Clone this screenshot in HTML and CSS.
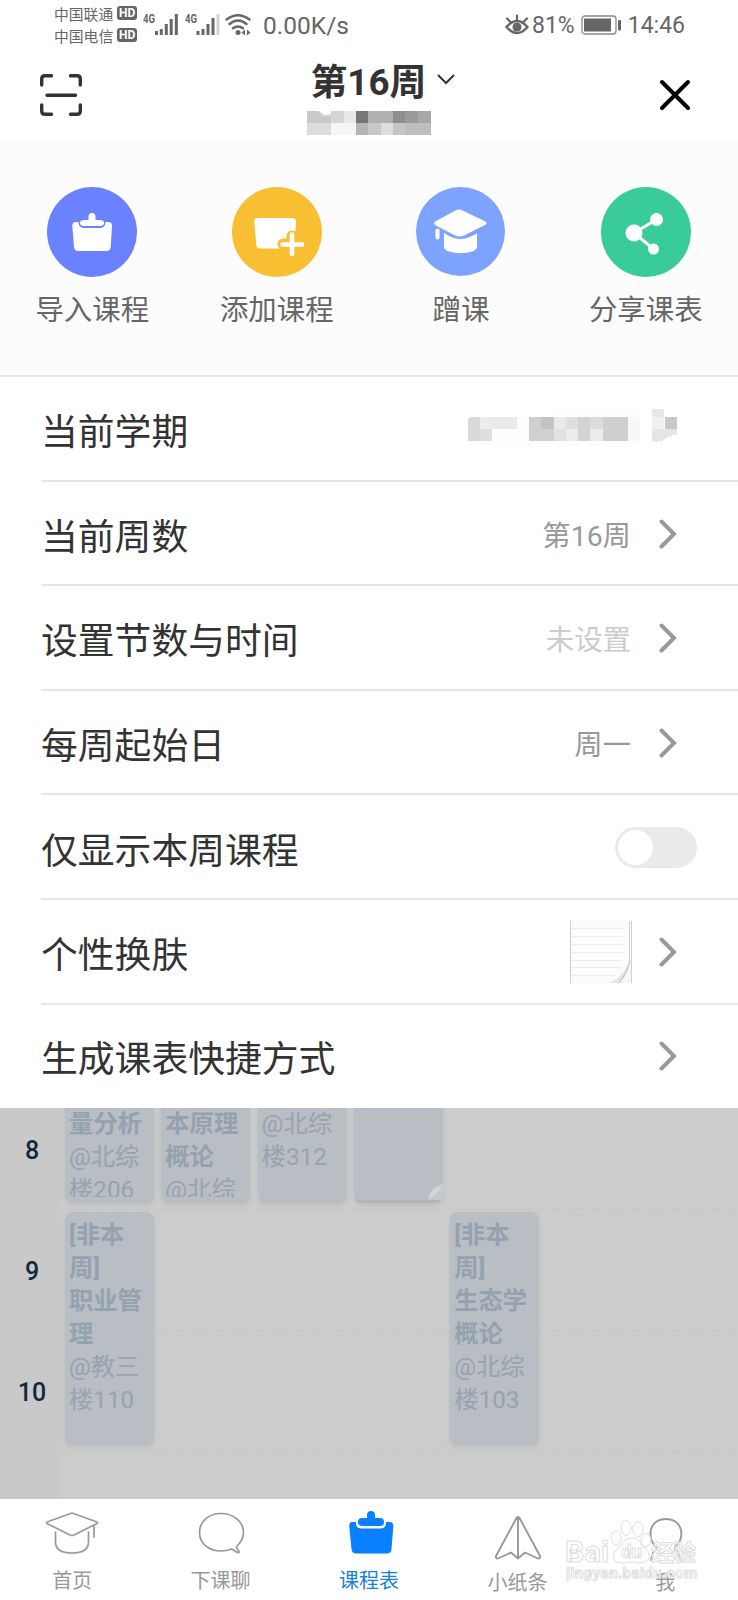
FILE: index.html
```html
<!DOCTYPE html>
<html lang="zh-CN">

<head>
    <meta charset="UTF-8">
    <meta name="viewport" content="width=device-width, initial-scale=1.0">
    <title>课程表</title>

    <link rel="stylesheet" href="styles.css">
</head>

<body>
    <!-- Shared icons -->
    <svg class="sprite" width="0" height="0">
        <symbol id="arrow" viewBox="0 0 18 30">
            <path d="M2.500 2.500L15 15L2.500 27.500" fill="none" stroke="#999" stroke-width="4" stroke-linecap="round" stroke-linejoin="miter" />
        </symbol>
    </svg>

    <div class="app">
        <!-- Status bar -->
        <div class="status-bar">
            <div class="carriers">
                <div class="carrier">中国联通<span class="hd">HD</span></div>
                <div class="carrier">中国电信<span class="hd">HD</span></div>
            </div>
            <svg class="signals" width="110" height="24" viewBox="0 0 110 24">
                <g fill="none" stroke="#666" stroke-width="3">
                    <path d="M13.500 19v4M18.300 17v6M23.300 12v11M28.200 7v16M33.300 2v21" />
                    <path d="M55 19v4M60 17v6M65 12v11M70 6v17" />
                    <path d="M75 2v21" stroke="#d5d5d5" />
                </g>
                <g class="net-type">
                    <text x="0" y="11" textLength="12" lengthAdjust="spacingAndGlyphs">4G</text>
                    <text x="42" y="11" textLength="12" lengthAdjust="spacingAndGlyphs">4G</text>
                </g>
                <g fill="none" stroke="#666" stroke-width="2.400" stroke-linecap="round">
                    <path d="M83.500 7.500Q95 -1 106.500 7.500M86.500 12Q95 5 103.500 12M90 16.300Q95 12.500 100 16.300" />
                </g>
                <circle cx="95" cy="20.500" r="2.500" fill="#666" />
                <path d="M98.500 20.500l3.500-3v6zM107.500 20.500l-3.500-3v6z" fill="#666" />
            </svg>
            <span class="speed">0.00K/s</span>
            <div class="status-right">
                <svg class="eye" width="24" height="22" viewBox="0 0 24 22">
                    <path d="M1.500 13Q12 1 22.500 13Q12 25 1.500 13z" fill="none" stroke="#666" stroke-width="2.400" />
                    <circle cx="12" cy="13" r="4.500" fill="#666" />
                    <path d="M12 6V1.500M5.500 8L2 4.500M18.500 8L22 4.500" stroke="#666" stroke-width="2.200" stroke-linecap="round" />
                </svg>
                <span class="percent">81%</span>
                <svg class="battery" width="41" height="20" viewBox="0 0 41 20">
                    <rect x="1" y="1" width="34" height="18" rx="3" fill="none" stroke="#888" stroke-width="1.300" />
                    <rect x="3" y="3.500" width="27" height="13" fill="#666" />
                    <rect x="37" y="5" width="3" height="10.500" rx="1" fill="#666" />
                </svg>
                <span class="clock">14:46</span>
            </div>
        </div>

        <!-- Title bar -->
        <header class="title-bar">
            <svg width="44" height="44" viewBox="0 0 44 44" fill="none" stroke="#333" stroke-width="3.400" stroke-linecap="round">
                <path d="M2.700 12V6Q2.700 2.700 6 2.700H12.500M31.500 2.700H38Q41.300 2.700 41.300 6V12M41.300 32V38Q41.300 41.300 38 41.300H31.500M12.500 41.300H6Q2.700 41.300 2.700 38V32M8 22.300H36.500" />
            </svg>
            <div class="week">
                <div class="week-title">
                    第16周
                    <svg width="18" height="11" viewBox="0 0 18 11">
                        <path d="M1.500 1.500L9 9L16.500 1.500" fill="none" stroke="#333" stroke-width="2" stroke-linecap="round" />
                    </svg>
                </div>
                <svg class="mosaic" width="124" height="24" viewBox="0 0 124 24" shape-rendering="crispEdges">
                    <path d="M0 0h12l6 4l6-2v22h-24z" fill="#ddd" />
                    <path d="M0 0h10l6 5h8v7h-24z" fill="#c9c9c9" />
                    <rect x="24" width="13" height="12" fill="#d5d5d5" />
                    <rect x="37" width="12" height="12" fill="#e9e9e8" />
                    <rect x="24" y="12" width="25" height="12" fill="#f6f6f4" />
                    <rect x="49" width="12" height="12" fill="#777" />
                    <rect x="61" width="25" height="12" fill="#b0b0b0" />
                    <rect x="86" width="12" height="12" fill="#8e8e8e" />
                    <rect x="98" width="13" height="12" fill="#9a9a9a" />
                    <rect x="111" width="13" height="12" fill="#a7a7a5" />
                    <rect x="49" y="12" width="12" height="12" fill="#b5b5b5" />
                    <rect x="61" y="12" width="13" height="12" fill="#c8c8c8" />
                    <rect x="74" y="12" width="12" height="12" fill="#dedede" />
                    <rect x="86" y="12" width="12" height="12" fill="#c5c5c5" />
                    <rect x="98" y="12" width="26" height="12" fill="#bebebe" />
                </svg>
            </div>
            <svg width="32" height="32" viewBox="0 0 32 32">
                <path d="M3 3L29 29M29 3L3 29" stroke="#000" stroke-width="4" stroke-linecap="round" />
            </svg>
        </header>

        <!-- Quick actions -->
        <div class="actions">
            <div class="action">
                <svg width="90" height="90" viewBox="0 0 90 90">
                    <circle cx="45" cy="45" r="45" fill="#6a82ff" />
                    <path d="M29 35h32q4.300 0 4 4l-1.300 21q-.3 4-4.500 4H31.500q-4.200 0-4.500-4L25.300 39q-.3-4 3.700-4z" fill="#fff" />
                    <path d="M31.500 32v3q0 6 6 6h15q6 0 6-6v-3z" fill="#6a82ff" />
                    <path d="M41.500 30q0-4 3.500-4t3.500 4v3H53q4 0 4 3t-4 3H37q-4 0-4-3t4-3h4.500z" fill="#fff" />
                </svg>
                <span>导入课程</span>
            </div>
            <div class="action">
                <svg width="90" height="90" viewBox="0 0 90 90">
                    <circle cx="45" cy="45" r="45" fill="#f8bf32" />
                    <path d="M26 31h34q4 0 4 4l-1.500 22q-.3 4.500-4.500 4.500H28.500q-4 0-4.300-4L22.300 35q-.3-4 3.700-4z" fill="#fff" />
                    <path d="M60 49v16M51 57h18" stroke="#f8bf32" stroke-width="11" stroke-linecap="round" />
                    <path d="M60 47.500v19.500M50.500 57.500h19.500" stroke="#fff" stroke-width="4.600" stroke-linecap="round" />
                </svg>
                <span>添加课程</span>
            </div>
            <div class="action">
                <svg width="90" height="90" viewBox="0 0 90 90">
                    <circle cx="44.500" cy="44.500" r="44.500" fill="#7da3ff" />
                    <path d="M39.500 23.500q3.500-1.800 7 0l22 10.500q4 2 0 4.300L48 48.500q-4.500 2-9 0L20 38.500q-4-2.200 0-4.500z" fill="#fff" />
                    <path d="M28 46q9 6 16 6t17-5.500v13q0 3-4 4.700q-12 4-25 0q-4-1.700-4-4.700z" fill="#fff" />
                    <path d="M21.500 43.500v7" stroke="#fff" stroke-width="4" stroke-linecap="round" />
                </svg>
                <span>蹭课</span>
            </div>
            <div class="action">
                <svg width="90" height="90" viewBox="0 0 90 90">
                    <circle cx="45" cy="45" r="45" fill="#39cc98" />
                    <path d="M55.500 32.500L33 46L52.500 62" fill="none" stroke="#fff" stroke-width="3" />
                    <g fill="#fff">
                        <circle cx="55.500" cy="32.500" r="6.500" />
                        <circle cx="33" cy="46" r="8.500" />
                        <circle cx="52.500" cy="62" r="5.500" />
                    </g>
                </svg>
                <span>分享课表</span>
            </div>
        </div>

        <!-- Settings list -->
        <div class="settings">
            <div class="setting">
                <span>当前学期</span>
                <svg class="mosaic-term" width="232" height="40" viewBox="0 0 232 40" shape-rendering="crispEdges">
                    <path d="M12 0H110V8H0V38H170V2H110z" fill="#fdfdfc" />
                    <path d="M4 8h8v24h-12V12q0-4 4-4z" fill="#dadada" />
                    <rect x="12" y="8" width="12" height="12" fill="#ececec" />
                    <rect x="12" y="20" width="12" height="12" fill="#dedede" />
                    <rect x="24" y="8" width="25" height="12" fill="#eaeaea" />
                    <rect x="61" y="8" width="12" height="24" fill="#d0d0d0" />
                    <rect x="73" y="8" width="13" height="12" fill="#c3c3c3" />
                    <rect x="73" y="20" width="13" height="12" fill="#d0d0d0" />
                    <rect x="86" y="8" width="12" height="12" fill="#e9e9e9" />
                    <rect x="86" y="20" width="12" height="12" fill="#e1e1e1" />
                    <rect x="98" y="8" width="12" height="12" fill="#dedede" />
                    <rect x="98" y="20" width="12" height="12" fill="#ececec" />
                    <rect x="110" y="8" width="12" height="24" fill="#d3d3d3" />
                    <rect x="122" y="8" width="13" height="12" fill="#dcdcdc" />
                    <rect x="122" y="20" width="13" height="12" fill="#ececec" />
                    <rect x="135" y="8" width="25" height="24" fill="#cfcfcf" />
                    <rect x="160" y="8" width="12" height="24" fill="#f8f8f6" />
                    <rect x="184" y="0" width="12" height="8" fill="#e7e7e7" />
                    <rect x="184" y="8" width="12" height="12" fill="#f0f0f0" />
                    <path d="M184 20h25v6q-8 0-12 4t-13 2z" fill="#e5e5e5" />
                    <rect x="197" y="8" width="12" height="12" fill="#c8c8c8" />
                </svg>
            </div>
            <div class="setting">
                <span>当前周数</span>
                <span class="value">第16周</span>
                <svg class="arrow"><use href="#arrow" /></svg>
            </div>
            <div class="setting">
                <span>设置节数与时间</span>
                <span class="value unset">未设置</span>
                <svg class="arrow"><use href="#arrow" /></svg>
            </div>
            <div class="setting">
                <span>每周起始日</span>
                <span class="value">周一</span>
                <svg class="arrow"><use href="#arrow" /></svg>
            </div>
            <div class="setting">
                <span>仅显示本周课程</span>
                <div class="toggle"><div class="knob"></div></div>
            </div>
            <div class="setting">
                <span>个性换肤</span>
                <svg class="skin" width="62" height="62" viewBox="0 0 62 62">
                    <rect width="62" height="62" fill="#fcfcfc" />
                    <path d="M1 7.500H54M1 15.500H52M1 23.500H54M1 31.500H54M1 39.500H52M1 46.500H51M1 54.500H46" stroke="#ededed" />
                    <path d="M60 41Q57 54 49 62H62V41z" fill="#f6f6f6" />
                    <path d="M60 39Q52 58 38 62H49Q57 54 60 39z" fill="#e6e6e6" />
                    <path d="M60 39Q57 53 49 62" fill="none" stroke="#b5b5b5" />
                    <path d="M.5 0V62M59.500 0V41M61.500 0V62" stroke="#cfcfcf" />
                </svg>
                <svg class="arrow"><use href="#arrow" /></svg>
            </div>
            <div class="setting">
                <span>生成课表快捷方式</span>
                <svg class="arrow"><use href="#arrow" /></svg>
            </div>
        </div>

        <!-- Timetable under the mask -->
        <div class="timetable">
            <div class="hour h8">8</div>
            <div class="hour h9">9</div>
            <div class="hour h10">10</div>
            <div class="line l1"></div>
            <div class="line l2"></div>
            <div class="line l3"></div>

            <div class="course mon early"><div class="course-text"><b>量分析</b><br>@北综<br>楼206</div></div>
            <div class="course tue early"><div class="course-text"><b>本原理<br>概论</b><br>@北综</div></div>
            <div class="course wed early"><div class="course-text">@北综<br>楼312</div></div>
            <div class="course thu early folded">
                <svg width="15" height="16" viewBox="0 0 15 16">
                    <path d="M15 0V16H0z" fill="#c4c7cb" />
                    <path d="M0 15Q3 3 15 0Q10 12 0 15z" fill="#d2d5d6" />
                </svg>
            </div>
            <div class="course mon late"><div class="course-text"><b>[非本<br>周]<br>职业管<br>理</b><br>@教三<br>楼110</div></div>
            <div class="course fri late"><div class="course-text"><b>[非本<br>周]<br>生态学<br>概论</b><br>@北综<br>楼103</div></div>
        </div>

        <!-- Bottom tabs -->
        <nav class="tabs">
            <div class="tab first">
                <svg width="54" height="46" viewBox="0 0 54 46" fill="none" stroke="#999" stroke-width="1.700" stroke-linejoin="round" stroke-linecap="round">
                    <path d="M27 2L52 11Q53 12 52 12.500L29 24Q27 25 25 24L2 12.500Q1 12 2 11zM10.500 21V31Q10.500 42 27 42T43.500 31V21M49 15V26" />
                </svg>
                <span>首页</span>
            </div>
            <div class="tab second">
                <svg width="54" height="46" viewBox="0 0 54 46" fill="none" stroke="#999" stroke-width="1.700" stroke-linejoin="round">
                    <path d="M38.500 38Q34 40 28 40C15 40 6.500 32 6.500 21.500S15 2.500 28 2.500S50.500 11 50.500 21.500Q50.500 29 44 35Q43 36 44 37.500L46 40.500Q46.500 42 44.500 41.500z" />
                </svg>
                <span>下课聊</span>
            </div>
            <div class="tab active">
                <svg width="54" height="46" viewBox="0 0 54 46">
                    <path d="M10 11H48Q51.500 11 51.300 16L49.500 38Q49 42.500 45 42.500H14Q10 42.500 9.500 38L7.300 16Q7 11 10 11z" fill="#0880ff" />
                    <path d="M14 8V12Q14 17.500 20 17.500H38Q44 17.500 44 12V8z" fill="#fff" />
                    <path d="M25 4Q25 0 29 0T33 4V7H38Q42 7 42 11T38 15H20Q16 15 16 11T20 7H25z" fill="#0880ff" />
                </svg>
                <span>课程表</span>
            </div>
            <div class="tab low">
                <svg width="54" height="46" viewBox="0 0 54 46" fill="none" stroke="#999" stroke-width="1.900" stroke-linejoin="round">
                    <path d="M25.500 3Q27 1 28.500 3L49 41Q49.500 44 47 43.500L34 37.500L27 43.500L20 37.500L7 43.500Q4.500 44 5 41zM27 2V43" />
                </svg>
                <span>小纸条</span>
            </div>
            <div class="tab low">
                <svg width="54" height="46" viewBox="0 0 54 46" fill="none" stroke="#999" stroke-width="1.900">
                    <path d="M20 34C8 25 10 4 28 4S47 25 37 32Q36 35 40 37L43 46M20 34L15 37L13 46" />
                </svg>
                <span>我</span>
            </div>
        </nav>

        <!-- Watermark over the tabs -->
        <svg class="watermark" width="136" height="68" viewBox="0 0 136 68">
            <g fill="#fff" fill-opacity=".65" stroke="#dedede" stroke-width="1">
                <ellipse cx="50" cy="19" rx="5" ry="7" />
                <ellipse cx="60" cy="9" rx="5" ry="7.500" />
                <ellipse cx="72" cy="10" rx="5" ry="7.500" />
                <ellipse cx="80" cy="21" rx="5" ry="6.500" />
                <path d="M66 19Q58 19 55 27Q45 33 48 41Q52 46 66 43Q80 46 83 40Q85 32 76 27Q73 19 66 19z" />
                <text class="wm-big" x="-1" y="43" textLength="44" lengthAdjust="spacingAndGlyphs">Bai</text>
                <text class="wm-du" x="55" y="39" textLength="21" lengthAdjust="spacingAndGlyphs">du</text>
                <text class="wm-cjk" x="85" y="42" textLength="45">经验</text>
                <text class="wm-url" x="0" y="59" textLength="131">jingyan.baidu.com</text>
            </g>
        </svg>
    </div>
</body>

</html>
```

FILE: styles.css
```css
/* Global styling */
* {
    margin: 0;
    padding: 0;
    box-sizing: border-box;
    font-family: Roboto, "Noto Sans CJK SC", sans-serif;
}

body {
    background: #fff;
    color: #333;
}

svg {
    display: block;
    flex-shrink: 0;
}

.sprite {
    position: absolute;
}

.app {
    position: relative;
    width: 738px;
    height: 1600px;
    overflow: hidden;
    display: flex;
    flex-direction: column;
}

/* Status bar */
.status-bar {
    height: 50px;
    padding: 0 53px 0 54px;
    display: flex;
    align-items: center;
    color: #666;
    font-size: 24px;
}

.carriers {
    width: 89px;
    padding-bottom: 2px;
}

.carrier {
    display: flex;
    align-items: center;
    gap: 4px;
    height: 22px;
    font-size: 14.8px;
    white-space: nowrap;
}

.hd {
    width: 20px;
    height: 14px;
    border-radius: 3px;
    background: #666;
    color: #fff;
    font-size: 12px;
    font-weight: 700;
    line-height: 14px;
    text-align: center;
}

.signals {
    width: 110px;
    margin-bottom: 2px;
}

.net-type text {
    font-size: 12px;
    font-weight: 700;
    fill: #666;
}

.speed {
    margin-left: 10px;
    font-size: 24.5px;
}

.status-right {
    margin-left: auto;
    display: flex;
    align-items: center;
}

.eye {
    margin-bottom: 1px;
}

.percent {
    margin-left: 3px;
    font-size: 23px;
}

.battery {
    margin: 0 6px 1px;
}

.clock {
    font-size: 23px;
}

/* Title bar */
.title-bar {
    height: 89px;
    padding: 0 47px 0 39px;
    display: flex;
    justify-content: space-between;
    align-items: flex-start;
}

.title-bar > svg {
    margin-top: 23px;
}

.title-bar > svg:last-child {
    margin-top: 29px;
}

.week {
    width: 148px;
    margin-right: -19px;
}

.week-title {
    display: flex;
    align-items: center;
    gap: 11px;
    height: 61px;
    padding: 0 0 3px 4px;
    font-size: 36.8px;
    font-weight: 700;
    white-space: nowrap;
}

/* Quick actions */
.actions {
    height: 238px;
    padding-top: 48px;
    display: grid;
    grid-template-columns: repeat(4, 1fr);
    background: #fcfcfc;
    border-bottom: 2px solid #e6e6e6;
}

.action {
    display: flex;
    flex-direction: column;
    align-items: center;
    gap: 14px;
    color: #666;
    font-size: 28.4px;
    line-height: 40px;
}

/* Settings list */
.settings {
    height: 731px;
    padding-left: 41px;
    display: grid;
    grid-template-rows: repeat(6, 104.6px) 1fr;
}

.setting {
    padding: 2px 61px 0 0;
    display: flex;
    align-items: center;
    border-bottom: 2px solid #e6e6e6;
    font-size: 36.8px;
}

.setting:last-child {
    padding-top: 0;
    border-bottom: none;
}

.setting > :nth-child(2) {
    margin-left: auto;
}

.setting > .value {
    padding-bottom: 1px;
    color: #999;
    font-size: 28.4px;
}

.setting > .unset {
    color: #ccc;
}

.arrow {
    width: 18px;
    height: 30px;
    margin-left: 28px;
}

.mosaic-term {
    margin-right: -23px;
}

.skin {
    margin-right: -1px;
}

.toggle {
    width: 82px;
    height: 41px;
    padding: 3px;
    margin-right: -20px;
    border-radius: 21px;
    background: #eaeaea;
}

.knob {
    width: 35px;
    height: 35px;
    border-radius: 50%;
    background: #fff;
}

/* Timetable */
.timetable {
    height: 391px;
    display: grid;
    grid-template-columns: 61px repeat(7, 96.3px);
    grid-template-rows: 102px 121px 121px 47px;
    background: linear-gradient(90deg, #c9c9c9 61px, #cccccc 61px);
    overflow: hidden;
}

.hour {
    grid-column: 1;
    padding-left: 3px;
    font-size: 25px;
    font-weight: 500;
    line-height: 30px;
    text-align: center;
    color: #10293f;
}

.h8 {
    grid-row: 1;
    padding-top: 28px;
}

.h9 {
    grid-row: 2;
    padding-top: 47px;
}

.h10 {
    grid-row: 3;
    padding-top: 47px;
}

.line {
    grid-column: 2 / 9;
    border-bottom: 1px dashed #c1c4c4;
}

.l1 {
    grid-row: 1;
}

.l2 {
    grid-row: 2;
}

.l3 {
    grid-row: 3;
}

.course {
    width: 89px;
    margin-left: 4px;
    padding: 0 4px;
    border-radius: 8px;
    background: #b9bdc4;
    box-shadow: 0 2px 4px rgba(150, 158, 168, 0.35);
    color: #97a3ae;
    font-size: 24.3px;
    line-height: 32.9px;
    white-space: nowrap;
    z-index: 1;
}

.course b {
    font-weight: 700;
    color: #94a2b0;
}

.early {
    grid-row: 1;
    margin-bottom: 7px;
    border-radius: 0 0 8px 8px;
}

.early .course-text {
    height: 89px;
    overflow: hidden;
}

.late {
    grid-row: 2 / 4;
    margin: 2px 0 7px 4px;
    padding-top: 7px;
}

.mon {
    grid-column: 2;
}

.tue {
    grid-column: 3;
}

.wed {
    grid-column: 4;
}

.thu {
    grid-column: 5;
}

.fri {
    grid-column: 6;
}

.folded {
    padding: 0;
    display: flex;
    justify-content: flex-end;
    align-items: flex-end;
    border-bottom: 3px solid #b0b5bc;
}

/* Bottom tabs */
.tabs {
    height: 101px;
    display: grid;
    grid-template-columns: repeat(5, 1fr);
    background: #fff;
}

.tab {
    padding-top: 12px;
    display: flex;
    flex-direction: column;
    align-items: center;
    gap: 9px;
    color: #999;
    font-size: 20px;
    line-height: 30px;
}

.first {
    padding-right: 3px;
}

.second {
    padding-right: 2px;
}

.low {
    padding: 16px 0 0 2px;
    gap: 7px;
}

.active {
    color: #1780e0;
}

/* Watermark */
.watermark {
    position: absolute;
    left: 566px;
    top: 1519px;
}

.wm-big {
    font-size: 30px;
    font-weight: 700;
}

.wm-du {
    font-size: 19px;
    font-weight: 700;
}

.wm-cjk {
    font-size: 23px;
    font-weight: 700;
}

.wm-url {
    font-size: 15px;
    font-weight: 700;
}
```
